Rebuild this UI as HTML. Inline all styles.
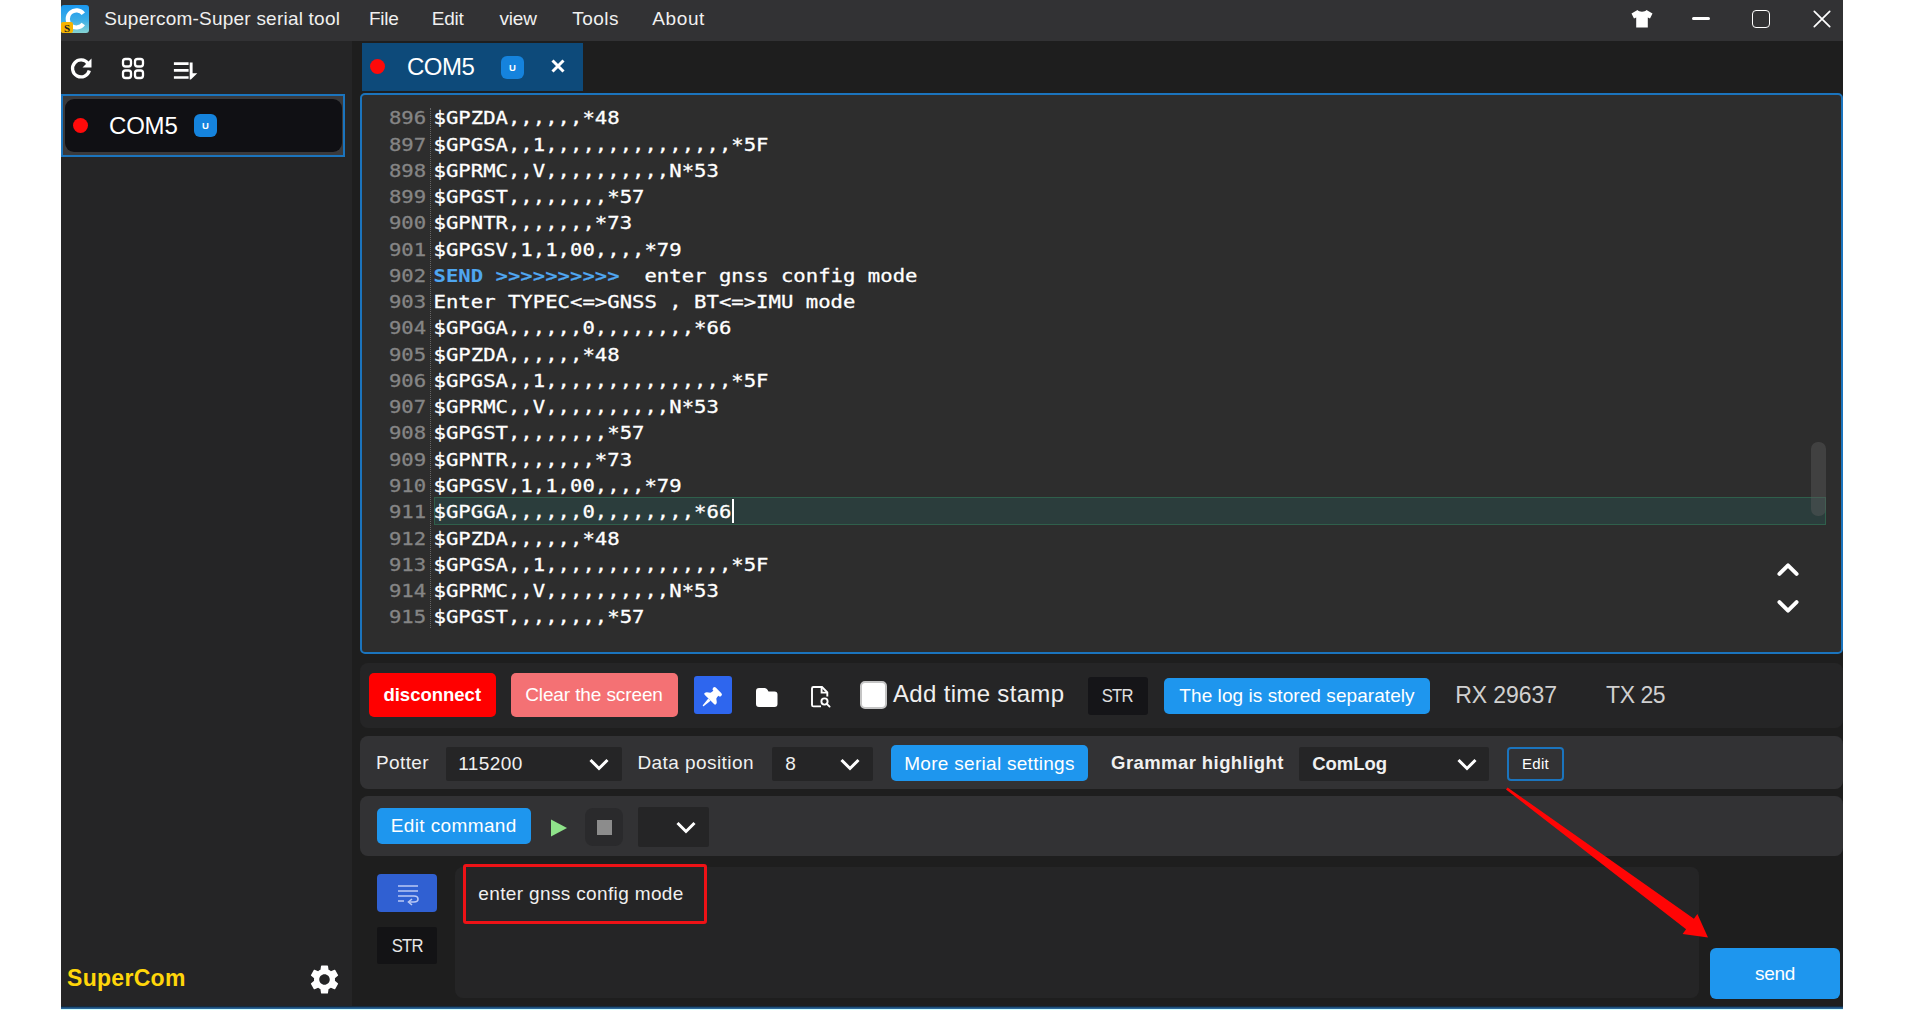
<!DOCTYPE html>
<html lang="en">
<head>
<meta charset="utf-8">
<title>Supercom-Super serial tool</title>
<style>
*{box-sizing:border-box;margin:0;padding:0}
html,body{width:1907px;height:1010px;overflow:hidden;background:#fff}
body{font-family:"Liberation Sans","DejaVu Sans",sans-serif;color:#fff;position:relative}
.abs{position:absolute}
#win{position:absolute;left:61px;top:0;width:1782px;height:1006px;background:#1e1e1e;overflow:hidden}
#winline{position:absolute;left:61px;top:1005.500px;width:1782px;height:3.300px;background:linear-gradient(#14202c,#143a5c 40%,#2a6496 60%)}
#title{position:absolute;left:0;top:0;width:1782px;height:41px;background:#323234}
#title .t{position:absolute;top:8px;font-size:19px;line-height:22px;color:#f0f0f0;white-space:nowrap}
#side{position:absolute;left:0;top:41px;width:291px;height:965px;background:#252526}
#sideitem{position:absolute;left:0;top:53px;width:284px;height:63px;border:2px solid #1b74bd;background:#3a3a3c}
#sideitem .in{position:absolute;left:2px;top:3px;right:1px;bottom:3px;background:#101014;border-radius:9px}
.dot{position:absolute;width:15px;height:15px;border-radius:50%;background:#ff0a0a}
.ub{position:absolute;background:#1583dd;border-radius:6px;color:#fff;font-size:9.500px;font-weight:bold;text-align:center}
#tab{position:absolute;left:301px;top:43px;width:221px;height:47.5px;background:#0d4a7a}
#editor{position:absolute;left:299px;top:93px;width:1483px;height:561px;border:2px solid #1b74bd;border-radius:5px;background:#2d2d2d}
#code{position:absolute;left:71.5px;top:9.28px;font-family:"DejaVu Sans Mono","Liberation Mono",monospace;font-size:20.6px;letter-spacing:.01px;line-height:26.28px;white-space:pre;color:#fff;-webkit-text-stroke:.35px currentColor}
#code .ln{position:absolute;left:-44.6px;color:#858585}
#code b{color:#4fa6f0;-webkit-text-stroke:.1px currentColor}
#code div{height:26.28px;position:relative;transform:scaleY(.89);transform-origin:0 20.27px}
.row{position:absolute;left:299px;width:1483px;border-radius:8px}
.row>.w{position:absolute;left:1px;top:0}
.btn{position:absolute;border-radius:5px;color:#fff;text-align:center;white-space:nowrap}
.sel{position:absolute;background:#252526;border-radius:2px}
.lbl{position:absolute;white-space:nowrap;color:#f0f0f0}
</style>
</head>
<body>
<div id="win">
  <div id="title">
    <svg class="abs" style="left:0;top:5px" width="28" height="28" viewBox="0 0 28 28">
      <defs><linearGradient id="lg" x1="0" y1="0" x2="0" y2="1"><stop offset="0" stop-color="#1a97ef"/><stop offset=".55" stop-color="#3daee6"/><stop offset="1" stop-color="#86d3d2"/></linearGradient></defs>
      <rect x="0" y="0" width="28" height="28" rx="3" fill="url(#lg)"/>
      <path d="M22.300 8.800 A8.600 8.600 0 1 0 22.300 19" fill="none" stroke="#fff" stroke-width="4.200"/>
      <rect x="0" y="17" width="12" height="11" rx="2" fill="#f5b400"/>
      <text x="6" y="26.5" font-family="Liberation Serif,serif" font-weight="bold" font-size="11" text-anchor="middle" fill="#222">S</text>
    </svg>
    <div class="t" style="left:43.2px;letter-spacing:.22px">Supercom-Super serial tool</div>
    <div class="t" style="left:308px;letter-spacing:-.3px">File</div>
    <div class="t" style="left:370.7px;letter-spacing:-.2px">Edit</div>
    <div class="t" style="left:438.4px;letter-spacing:-.13px">view</div>
    <div class="t" style="left:511.2px;letter-spacing:.49px">Tools</div>
    <div class="t" style="left:591.3px;letter-spacing:.61px">About</div>
    <!-- shirt -->
    <svg class="abs" style="left:1569px;top:9px" width="24" height="20" viewBox="0 0 24 20"><path d="M7.5 1 C9 3.2 15 3.2 16.5 1 L22.5 4.5 L20 9.5 L17.8 8.6 L17.8 18.5 L6.2 18.5 L6.2 8.6 L4 9.5 L1.5 4.5 Z" fill="#fff"/></svg>
    <div class="abs" style="left:1631px;top:17px;width:18px;height:3px;border-radius:1.5px;background:#fff"></div>
    <div class="abs" style="left:1691px;top:10px;width:18px;height:18px;border:1.800px solid #fff;border-radius:4px"></div>
    <svg class="abs" style="left:1750.500px;top:9px" width="20" height="20" viewBox="0 0 20 20"><path d="M2.300 2.300 L17.700 17.700 M17.700 2.300 L2.300 17.700" stroke="#fff" stroke-width="1.700" stroke-linecap="round"/></svg>
  </div>

  <div id="side">
    <!-- refresh -->
    <svg class="abs" style="left:7px;top:15px" width="26" height="26" viewBox="0 0 26 26"><path d="M20 7.500 A8.500 8.500 0 1 0 21.300 14.500" fill="none" stroke="#fff" stroke-width="3.300"/><path d="M23.500 2.500 L23.500 11.500 L14.500 11.500 Z" fill="#fff"/></svg>
    <!-- grid -->
    <svg class="abs" style="left:59.5px;top:16px" width="26" height="24" viewBox="0 0 26 24"><g fill="none" stroke="#fff" stroke-width="2.300"><rect x="2" y="2" width="8" height="7.5" rx="2.5"/><rect x="14" y="2" width="8" height="7.5" rx="2.5"/><rect x="2" y="13.5" width="8" height="7.5" rx="2.5"/><rect x="14" y="13.5" width="8" height="7.5" rx="2.5"/></g></svg>
    <!-- sort -->
    <svg class="abs" style="left:112px;top:18px" width="28" height="24" viewBox="0 0 28 24"><g stroke="#fff" stroke-width="2.7" fill="none"><path d="M.9 4.700 H15.600 M.9 11.400 H15.600 M.9 18.500 H15.600"/></g><path d="M16.700 3.400 H19.600 V14.200 H24.300 L17.900 20.500 H16.700 Z" fill="#fff"/></svg>
    <div id="sideitem"><div class="in"></div>
      <div class="dot" style="left:10px;top:22px"></div>
      <div class="abs" style="left:46px;top:16px;font-size:24px;line-height:28px;letter-spacing:-.2px;color:#fff">COM5</div>
      <div class="ub" style="left:131px;top:18px;width:23px;height:23px;line-height:23px">U</div>
    </div>
    <div class="abs" style="left:6px;top:923px;font-size:23px;line-height:28px;letter-spacing:.3px;font-weight:bold;color:#ffd60a">SuperCom</div>
    <svg class="abs" style="left:245.500px;top:920.500px" width="35" height="35" viewBox="0 0 24 24"><path fill="#fff" d="M19.14 12.94c.04-.3.06-.61.06-.94 0-.32-.02-.64-.07-.94l2.03-1.58a.49.49 0 0 0 .12-.61l-1.92-3.32a.488.488 0 0 0-.59-.22l-2.39.96c-.5-.38-1.03-.7-1.62-.94l-.36-2.54a.484.484 0 0 0-.48-.41h-3.84c-.24 0-.43.17-.47.41l-.36 2.54c-.59.24-1.13.57-1.62.94l-2.39-.96c-.22-.08-.47 0-.59.22L2.74 8.87c-.12.21-.08.47.12.61l2.03 1.58c-.05.3-.09.63-.09.94s.02.64.07.94l-2.03 1.58a.49.49 0 0 0-.12.61l1.92 3.32c.12.22.37.29.59.22l2.39-.96c.5.38 1.03.7 1.62.94l.36 2.54c.05.24.24.41.48.41h3.84c.24 0 .44-.17.47-.41l.36-2.54c.59-.24 1.13-.56 1.62-.94l2.39.96c.22.08.47 0 .59-.22l1.92-3.32c.12-.22.07-.47-.12-.61l-2.01-1.58zM12 15.6c-1.98 0-3.6-1.62-3.6-3.6s1.620-3.6 3.600-3.600 3.600 1.620 3.600 3.600-1.620 3.600-3.600 3.600z"/></svg>
  </div>

  <div id="tab">
    <div class="dot" style="left:8px;top:16px"></div>
    <div class="abs" style="left:45px;top:10px;font-size:24px;line-height:28px;letter-spacing:-.5px;color:#fff">COM5</div>
    <div class="ub" style="left:139px;top:13px;width:23px;height:23px;line-height:23px">U</div>
    <svg class="abs" style="left:188px;top:15px" width="16" height="16" viewBox="0 0 16 16"><path d="M2.5 2.5 L13.5 13.5 M13.5 2.5 L2.5 13.5" stroke="#fff" stroke-width="3"/></svg>
  </div>

  <div id="editor">
    <div class="abs" style="left:72px;top:402px;width:1392px;height:28px;background:#2b3d3c;border:1px solid #2f5f4b"></div>
    <div class="abs" style="left:67.5px;top:13px;width:0;height:520px;border-left:1px dotted #666"></div>
    <div id="code"><div><span class="ln">896</span>$GPZDA,,,,,,*48</div><div><span class="ln">897</span>$GPGSA,,1,,,,,,,,,,,,,,,*5F</div><div><span class="ln">898</span>$GPRMC,,V,,,,,,,,,,N*53</div><div><span class="ln">899</span>$GPGST,,,,,,,,*57</div><div><span class="ln">900</span>$GPNTR,,,,,,,*73</div><div><span class="ln">901</span>$GPGSV,1,1,00,,,,*79</div><div><span class="ln">902</span><b>SEND &gt;&gt;&gt;&gt;&gt;&gt;&gt;&gt;&gt;&gt;</b>  enter gnss config mode</div><div><span class="ln">903</span>Enter TYPEC&lt;=&gt;GNSS , BT&lt;=&gt;IMU mode</div><div><span class="ln">904</span>$GPGGA,,,,,,0,,,,,,,,*66</div><div><span class="ln">905</span>$GPZDA,,,,,,*48</div><div><span class="ln">906</span>$GPGSA,,1,,,,,,,,,,,,,,,*5F</div><div><span class="ln">907</span>$GPRMC,,V,,,,,,,,,,N*53</div><div><span class="ln">908</span>$GPGST,,,,,,,,*57</div><div><span class="ln">909</span>$GPNTR,,,,,,,*73</div><div><span class="ln">910</span>$GPGSV,1,1,00,,,,*79</div><div><span class="ln">911</span>$GPGGA,,,,,,0,,,,,,,,*66</div><div><span class="ln">912</span>$GPZDA,,,,,,*48</div><div><span class="ln">913</span>$GPGSA,,1,,,,,,,,,,,,,,,*5F</div><div><span class="ln">914</span>$GPRMC,,V,,,,,,,,,,N*53</div><div><span class="ln">915</span>$GPGST,,,,,,,,*57</div></div>
    <div class="abs" style="left:369.5px;top:403.5px;width:2px;height:24.5px;background:#fff"></div>
    <div class="abs" style="left:1449px;top:346.5px;width:14.5px;height:74.5px;border-radius:7px;background:rgba(90,90,90,.45)"></div>
    <svg class="abs" style="left:1414px;top:465.500px" width="24" height="16" viewBox="0 0 24 16"><path d="M3.400 12.900 L12 4.300 L20.600 12.900" fill="none" stroke="#fff" stroke-width="3.900" stroke-linecap="round" stroke-linejoin="round"/></svg>
    <svg class="abs" style="left:1414px;top:503.500px" width="24" height="16" viewBox="0 0 24 16"><path d="M3.400 3.100 L12 11.700 L20.600 3.100" fill="none" stroke="#fff" stroke-width="3.900" stroke-linecap="round" stroke-linejoin="round"/></svg>
  </div>

  <!-- toolbar row 1 -->
  <div class="row" style="top:662.500px;height:65.500px;background:#252526"><div class="w" style="top:-.5px">
    <div class="btn" style="left:8px;top:11px;width:126.5px;height:44px;line-height:43px;background:#ff0000;font-weight:bold;font-size:18.5px">disconnect</div>
    <div class="btn" style="left:149.5px;top:11px;width:167px;height:44px;line-height:43px;background:#f47174;font-size:19px;letter-spacing:-.11px">Clear the screen</div>
    <div class="abs" style="left:333px;top:14.300px;width:38px;height:38px;background:#2e66ee;border-radius:3px"></div>
    <svg class="abs" style="left:338px;top:19.300px" width="28" height="28" viewBox="-14 -14 28 28"><g transform="translate(-1.300,2.300) rotate(45)" fill="#fff"><rect x="-5.700" y="-9.700" width="11.400" height="3.800" rx="1.700"/><rect x="-3.700" y="-7.500" width="7.400" height="5"/><path d="M-3.700 -3.500 C-3.700 -1.500 -8 -1 -8 2 Q-8 3.200 -6.800 3.200 L6.800 3.200 Q8 3.200 8 2 C8 -1 3.700 -1.500 3.700 -3.500 Z"/><path d="M-1.600 3.200 L1.600 3.200 L.6 12 Q0 13 -.6 12 Z"/></g></svg>
    <svg class="abs" style="left:394.500px;top:25.900px" width="22" height="20" viewBox="0 0 22 20"><path d="M0 3 Q0 0 3 0 H8.800 Q10.300 0 11.300 1.500 L12.500 3.400 H18.500 Q21.500 3.400 21.500 6.400 V16 Q21.500 19 18.500 19 H3 Q0 19 0 16 Z" fill="#fff"/></svg>
    <svg class="abs" style="left:448px;top:22px" width="24" height="26" viewBox="0 0 24 26"><g fill="none" stroke="#fff" stroke-width="1.900"><path d="M12 22.400 H4.500 Q3 22.400 3 20.900 V4.500 Q3 3 4.500 3 H13 L18.300 8.300 V12.500"/><path d="M12.600 3.200 V8.600 H18"/><circle cx="15.500" cy="17.500" r="3.100"/><path d="M17.800 19.800 L20.600 22.600" stroke-linecap="round"/></g></svg>
    <div class="abs" style="left:498.700px;top:19.200px;width:27.500px;height:27.500px;background:#fff;border:2px solid #c4c4c4;border-radius:5px"></div>
    <div class="lbl" style="left:532px;top:17px;font-size:24px;line-height:30px;letter-spacing:.33px">Add time stamp</div>
    <div class="btn" style="left:727px;top:15px;width:59.5px;height:37.5px;line-height:38px;background:#151518;border-radius:3px;color:#e0e0e0"><span style="display:inline-block;font-size:18.500px;letter-spacing:-.8px;transform:scaleX(.9)">STR</span></div>
    <div class="btn" style="left:803px;top:15.5px;width:266px;height:36.5px;line-height:36px;background:#1e96ee;font-size:19px;letter-spacing:.07px">The log is stored separately</div>
    <div class="lbl" style="left:1094.3px;top:19px;font-size:23px;line-height:28px;letter-spacing:-.09px;color:#d0d0d0">RX 29637</div>
    <div class="lbl" style="left:1245.1px;top:19px;font-size:23px;line-height:28px;letter-spacing:-.47px;color:#d0d0d0">TX 25</div>
  </div></div>

  <!-- row 2 -->
  <div class="row" style="top:736px;height:53.300px;background:#323234"><div class="w" style="top:1px">
    <div class="lbl" style="left:15px;top:14px;font-size:19px;line-height:24px;letter-spacing:.39px">Potter</div>
    <div class="sel" style="left:85px;top:10px;width:176px;height:34px"></div>
    <div class="lbl" style="left:97.3px;top:15px;font-size:19px;line-height:24px;letter-spacing:.42px">115200</div>
    <svg class="abs" style="left:227px;top:20px" width="22" height="16" viewBox="0 0 22 16"><path d="M2.500 3 L11 11.500 L19.500 3" fill="none" stroke="#fff" stroke-width="3"/></svg>
    <div class="lbl" style="left:276.4px;top:14px;font-size:19px;line-height:24px;letter-spacing:.43px">Data position</div>
    <div class="sel" style="left:411px;top:10px;width:101px;height:34px"></div>
    <div class="lbl" style="left:424.2px;top:15px;font-size:19px;line-height:24px">8</div>
    <svg class="abs" style="left:478px;top:20px" width="22" height="16" viewBox="0 0 22 16"><path d="M2.500 3 L11 11.500 L19.500 3" fill="none" stroke="#fff" stroke-width="3"/></svg>
    <div class="btn" style="left:530px;top:8px;width:197px;height:36px;line-height:38px;background:#1e96ee;font-size:19px;letter-spacing:.29px">More serial settings</div>
    <div class="lbl" style="left:750.1px;top:14px;font-size:18.5px;line-height:24px;letter-spacing:.42px;font-weight:bold">Grammar highlight</div>
    <div class="sel" style="left:938px;top:10px;width:190px;height:34px"></div>
    <div class="lbl" style="left:951.3px;top:15px;font-size:18.5px;line-height:24px;letter-spacing:-.06px;font-weight:bold">ComLog</div>
    <svg class="abs" style="left:1095px;top:20px" width="22" height="16" viewBox="0 0 22 16"><path d="M2.500 3 L11 11.500 L19.500 3" fill="none" stroke="#fff" stroke-width="3"/></svg>
    <div class="btn" style="left:1146px;top:10px;width:57px;height:34px;line-height:29px;border:2px solid #1b74bd;font-size:15px;letter-spacing:.24px;border-radius:4px">Edit</div>
  </div></div>

  <!-- row 3 -->
  <div class="row" style="top:796px;height:60px;background:#323234"><div class="w" style="top:.5px">
    <div class="btn" style="left:16px;top:11px;width:153.500px;height:36.500px;line-height:36px;background:#1e96ee;font-size:19px;letter-spacing:.38px">Edit command</div>
    <svg class="abs" style="left:188px;top:21px" width="20" height="20" viewBox="0 0 20 20"><path d="M2 1.500 L18 10 L2 18.500 Z" fill="#8fe38a"/></svg>
    <div class="abs" style="left:224px;top:11px;width:38px;height:38px;background:#2a2a2c;border-radius:8px"></div>
    <div class="abs" style="left:236px;top:23px;width:15px;height:15px;background:#8c8c8c"></div>
    <div class="sel" style="left:277px;top:10px;width:71px;height:40px"></div>
    <svg class="abs" style="left:314px;top:23px" width="22" height="16" viewBox="0 0 22 16"><path d="M2.500 3 L11 11.500 L19.500 3" fill="none" stroke="#fff" stroke-width="3"/></svg>
  </div></div>

  <!-- input area -->
  <div class="abs" style="left:316px;top:874.400px;width:60px;height:38px;background:#3060d2;border-radius:4px"></div>
  <svg class="abs" style="left:335px;top:882px" width="24" height="24" viewBox="0 0 24 24"><g fill="none" stroke="#b9c8f5" stroke-width="1.600"><path d="M2 4 H22 M2 9 H22 M2 14 H18 Q22 14 22 17 Q22 20 18 20 H13 M2 19 H8"/><path d="M16 17 L12.500 20 L16 23"/></g></svg>
  <div class="abs" style="left:316px;top:927px;width:60px;height:37px;background:#131315;border-radius:2px;text-align:center;line-height:38px;color:#e8e8e8"><span style="display:inline-block;font-size:18.500px;letter-spacing:-.8px;transform:scaleX(.9)">STR</span></div>
  <div class="abs" style="left:394px;top:867px;width:1244px;height:131px;background:#252526;border-radius:8px"></div>
  <div class="abs" style="left:402px;top:864px;width:244px;height:60px;border:3px solid #ee1216;border-radius:3px"></div>
  <div class="lbl" style="left:417.3px;top:882px;font-size:19px;line-height:24px;letter-spacing:.36px">enter gnss config mode</div>
  <div class="btn" style="left:1649px;top:948px;width:130px;height:51px;line-height:51px;background:#1e96ee;font-size:19px;letter-spacing:-.24px;border-radius:6px">send</div>

  <!-- red arrow -->
  <svg class="abs" style="left:1430px;top:780px" width="240" height="170" viewBox="0 0 240 170"><path d="M16.6 7.4 L202.9 138.85 L206.4 134 L217 157.4 L191.6 154.1 L195.1 149.3 L15 9.4 Z" fill="#ff0505"/></svg>
</div>
<div id="winline"></div>
<div class="abs" style="left:61px;top:1008.700px;width:1782px;height:1.300px;background:#d2ffff"></div>
</body>
</html>
